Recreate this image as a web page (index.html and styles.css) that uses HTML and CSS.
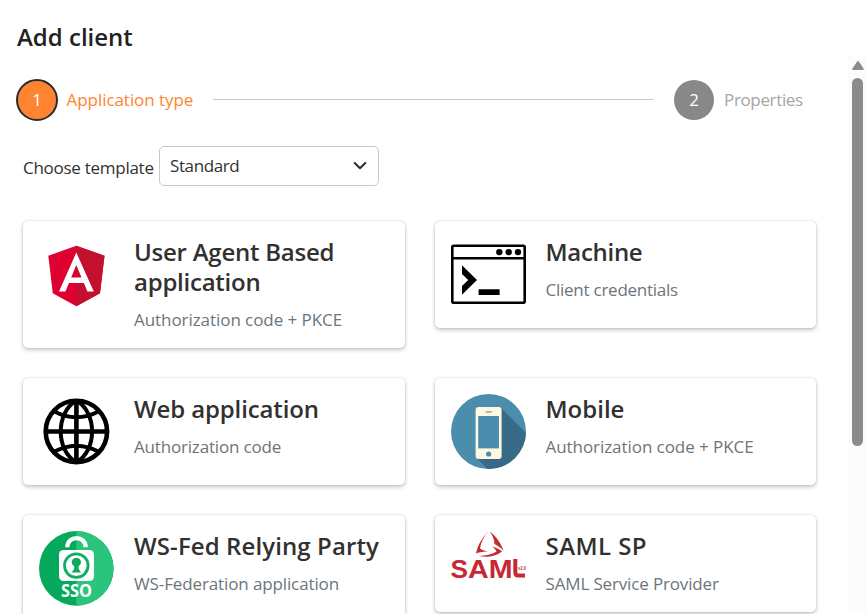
FILE: index.html
```html
<!DOCTYPE html>
<html lang="en">
<head>
<meta charset="utf-8">
<title>Add client</title>
<link rel="stylesheet" href="styles.css">
</head>
<body>
<main class="dialog">
  <div class="content">
    <h1 class="title">Add client</h1>
    <div class="stepper">
      <div class="step active"><span class="circle">1</span><span class="step-label">Application type</span></div>
      <div class="line"></div>
      <div class="step"><span class="circle">2</span><span class="step-label props">Properties</span></div>
    </div>
    <div class="template">
      <span class="template-label">Choose template</span>
      <div class="select"><span class="value">Standard</span>
        <svg width="14" height="10" viewBox="0 0 14 10"><path d="M1.700 2 7 7.200 12.300 2" fill="none" stroke="#2f2f2f" stroke-width="2.100" stroke-linecap="round" stroke-linejoin="round"/></svg>
      </div>
    </div>
    <div class="cards">
      <article class="card">
        <svg class="icon" viewBox="0 0 75 75">
          <g transform="translate(0 .8)"><path d="M37.300 8 65.500 18 61 55.500 37.300 68.500 13.800 55.500 9.300 18Z" fill="#dd0031"/>
          <path d="M37.300 8 65.500 18 61 55.500 37.300 68.500Z" fill="#c3102f"/>
          <path fill-rule="evenodd" d="M37.300 14.700 20 53.800H26.400L30 45.200H44.900L48.400 53.800H54.800ZM37.300 27.200 42.500 39.800H32.200Z" fill="#fff"/></g>
        </svg>
        <div class="text"><h2 class="name uab">User Agent Based application</h2><p class="desc pkce">Authorization code + PKCE</p></div>
      </article>
      <article class="card">
        <svg class="icon" viewBox="0 0 75 75">
          <g transform="translate(0 -.5)"><rect x="1.300" y="9.300" width="72.400" height="57" rx="1.500" fill="none" stroke="#000" stroke-width="2.600"/>
          <path d="M1 21.800H74" stroke="#000" stroke-width="2.600"/>
          <circle cx="48.300" cy="15.600" r="3.200"/><circle cx="57.700" cy="15.600" r="3.200"/><circle cx="67" cy="15.600" r="3.200"/>
          <path d="M11 28.800 26 43.500 11 58.200V49.500L17.200 43.500 11 37.500ZM27.600 52.700H48.600V58.500H27.600Z"/></g>
        </svg>
        <div class="text"><h2 class="name machine">Machine</h2><p class="desc creds">Client credentials</p></div>
      </article>
      <article class="card">
        <svg class="icon" viewBox="0 0 75 75">
          <g fill="none" stroke="#000" stroke-width="4.600"><circle cx="37.400" cy="37.500" r="30.700"/>
          <path d="M37.400 6.800V68.200M6.700 37.500H68.100"/><path stroke-width="4" d="M37.400 6.800C16.500 18 16.500 57 37.400 68.200M37.400 6.800C58.300 18 58.300 57 37.400 68.200"/><path stroke-width="3.800" d="M14.500 17Q37.400 29.500 60.300 17M14.500 58Q37.400 45.500 60.300 58"/></g>
        </svg>
        <div class="text"><h2 class="name web">Web application</h2><p class="desc code">Authorization code</p></div>
      </article>
      <article class="card">
        <svg class="icon" viewBox="0 0 75 75">
          <defs><clipPath id="disc"><circle cx="37.500" cy="37.500" r="37.500"/></clipPath></defs>
          <g clip-path="url(#disc)"><path d="M0 0H75V75H0Z" fill="#4b8dad"/><path d="M50 14 90 54V90H50L26 64Z" fill="#376a86"/></g>
          <rect x="24.600" y="13" width="26" height="52" rx="3" fill="#fef8e3"/>
          <path d="M27.200 22H48V54.400H27.200Z" fill="#4b8dad"/><rect x="34.500" y="16.900" width="6.500" height="1.800" rx=".9" fill="#8eb6c4"/><circle cx="37.600" cy="60" r="2.600" fill="#4b8dad"/>
        </svg>
        <div class="text"><h2 class="name mobile">Mobile</h2><p class="desc pkce">Authorization code + PKCE</p></div>
      </article>
      <article class="card">
        <svg class="icon" viewBox="0 0 75 75">
          <circle cx="37.300" cy="37.400" r="37.300" fill="#06a95b"/><path d="M37.300.1A37.300 37.300 0 0 1 37.300 74.700Z" fill="#2bc47c"/>
          <path d="M28.300 16.300C28.300 4 46.700 4 46.700 16.300" fill="none" stroke="#fff" stroke-width="4.200"/>
          <rect x="20" y="19" width="35" height="31" rx="4.500" fill="#fff"/>
          <circle cx="37.300" cy="34.600" r="11.800" fill="#fff" stroke="#12ad64" stroke-width="2.800"/>
          <path d="M35.200 35.300A4.600 4.600 0 1 1 39.500 35.300L39.700 38 42 41.600H32.700L35 38Z" fill="#10a960"/>
          <text class="sso" x="37.500" y="66.400" text-anchor="middle" textLength="31" lengthAdjust="spacingAndGlyphs">SSO</text>
        </svg>
        <div class="text"><h2 class="name wsfed">WS-Fed Relying Party</h2><p class="desc fed">WS-Federation application</p></div>
      </article>
      <article class="card">
        <svg class="icon saml-icon" viewBox="0 0 75 50">
          <g fill="#c62931"><path d="M37.500 0C32 6 27 13 25 22.500 29 21 33 20.500 37 20.500 32.500 19.500 30 18.500 29 17.500 30 11 33 5 37.500 0Z"/>
          <path d="M38.500.5C45 5 50 12 52.500 20 49.500 16.500 46.500 14.300 43.500 13 43.500 8.500 41.500 4 38.500.5Z"/>
          <path d="M51 20.500C44 26 36 26.500 28 25 35 24.700 41 23.500 45.500 20.500 44.500 18.500 43 16.700 41 15.500 45.500 16.500 49 18.500 51 20.500Z"/></g>
          <text class="saml" x="-.6" y="46.500" textLength="17.500" lengthAdjust="spacingAndGlyphs">S</text>
          <text class="saml" x="17" y="46.500" textLength="44.500" lengthAdjust="spacingAndGlyphs">AM</text>
          <path d="M64.300 28V41Q64.300 44.500 67 44.500H74" fill="none" stroke="#c62931" stroke-width="4"/>
          <text class="version" x="67.300" y="38.600" textLength="7.500" lengthAdjust="spacingAndGlyphs">v2.0</text>
        </svg>
        <div class="text"><h2 class="name samlsp">SAML SP</h2><p class="desc provider">SAML Service Provider</p></div>
      </article>
    </div>
  </div>
  <div class="scrollbar">
    <svg width="14" height="11" viewBox="0 0 14 11"><path d="M7 2 11.800 9H2.200Z" fill="#8b8b8b" stroke="#8b8b8b" stroke-width="2" stroke-linejoin="round"/></svg>
    <div class="thumb"></div>
  </div>
</main>
</body>
</html>
```
FILE: styles.css
```css
* { box-sizing: border-box; }
html, body { margin: 0; height: 614px; overflow: hidden; }
body { font: 17px/27px "Open Sans", "Noto Sans", sans-serif; color: #323130; background: #fff; }
.dialog { display: flex; height: 614px; overflow: hidden; }
.content { width: 848px; padding: 21px 31px 0 16px; flex: none; }
.title { margin: 0; padding-left: 1px; font-size: 24px; line-height: 32px; font-weight: 600; color: #222; white-space: nowrap; }
.stepper { display: flex; align-items: center; height: 42px; margin-top: 26px; white-space: nowrap; }
.step { display: flex; align-items: center; color: #a5a5a5; }
.step-label { padding-bottom: 2px; letter-spacing: -.05px; }
.circle { width: 40px; height: 40px; border-radius: 50%; background: #898886; color: #fff; display: flex; align-items: center; justify-content: center; margin-right: 10px; padding-bottom: 1px; }
.active { color: #ff8432; }
.active .circle { width: 42px; height: 42px; background: #ff8432; border: 2px solid #2b2b2b; margin-right: 8.500px; }
.step:first-child { width: 197px; }
.step:last-child { width: 143px; }
.props { letter-spacing: -.35px; }
.line { width: 441px; height: 1px; background: #c8c8c8; margin: 0 20px 1px 0; }
.template { display: flex; align-items: center; margin: 25px 0 0 7px; height: 40px; white-space: nowrap; }
.template-label { width: 136px; padding-top: 2px; letter-spacing: -.27px; }
.value { letter-spacing: -.4px; padding-bottom: 1px; }
.select { width: 220px; height: 40px; border: 1px solid #c8c8c8; border-radius: 5px; display: flex; align-items: center; justify-content: space-between; padding: 0 11px 0 10px; }
.cards { display: grid; grid-template-columns: 382px 381px; column-gap: 30px; row-gap: 30px; align-items: start; margin: 35px 0 0 7px; }
.card { display: flex; align-items: flex-start; padding: 16px; border-radius: 5px; background: #fff; box-shadow: 0 2px 4px rgba(0,0,0,.22), 0 0 2px rgba(0,0,0,.16); }
.icon { width: 75px; height: 75px; flex: none; display: block; overflow: visible; }
.saml-icon { height: 50px; }
.text { margin-left: 20px; min-width: 0; }
.card:nth-child(even) .text { margin-left: 19.500px; }
.name { font-size: 24px; line-height: 30px; font-weight: 600; margin: 0 0 10px; color: #323130; }
.uab { letter-spacing: -.24px; }
.machine { letter-spacing: -.3px; }
.web { letter-spacing: -.13px; }
.wsfed { letter-spacing: .1px; }
.samlsp { letter-spacing: .45px; }
.desc { margin: 0; line-height: 25px; color: #6c757d; white-space: nowrap; }
.pkce { letter-spacing: -.06px; }
.creds { letter-spacing: -.25px; }
.code { letter-spacing: -.18px; }
.fed { letter-spacing: -.12px; }
.provider { letter-spacing: -.15px; }
.sso { font: 700 18px "Open Sans", sans-serif; fill: #fff; }
.saml { font: 700 25px "Liberation Sans", sans-serif; fill: #c62931; }
.version { font: 700 5px "Liberation Sans", sans-serif; fill: #c62931; }
.scrollbar { width: 18px; margin-top: 55px; background: #fcfcfc; display: flex; flex-direction: column; align-items: center; padding: 5px 0 0 1px; }
.scrollbar svg { flex: none; }
.thumb { width: 11px; height: 368px; margin-top: 7px; border-radius: 6px; background: #8b8b8b; }
```
